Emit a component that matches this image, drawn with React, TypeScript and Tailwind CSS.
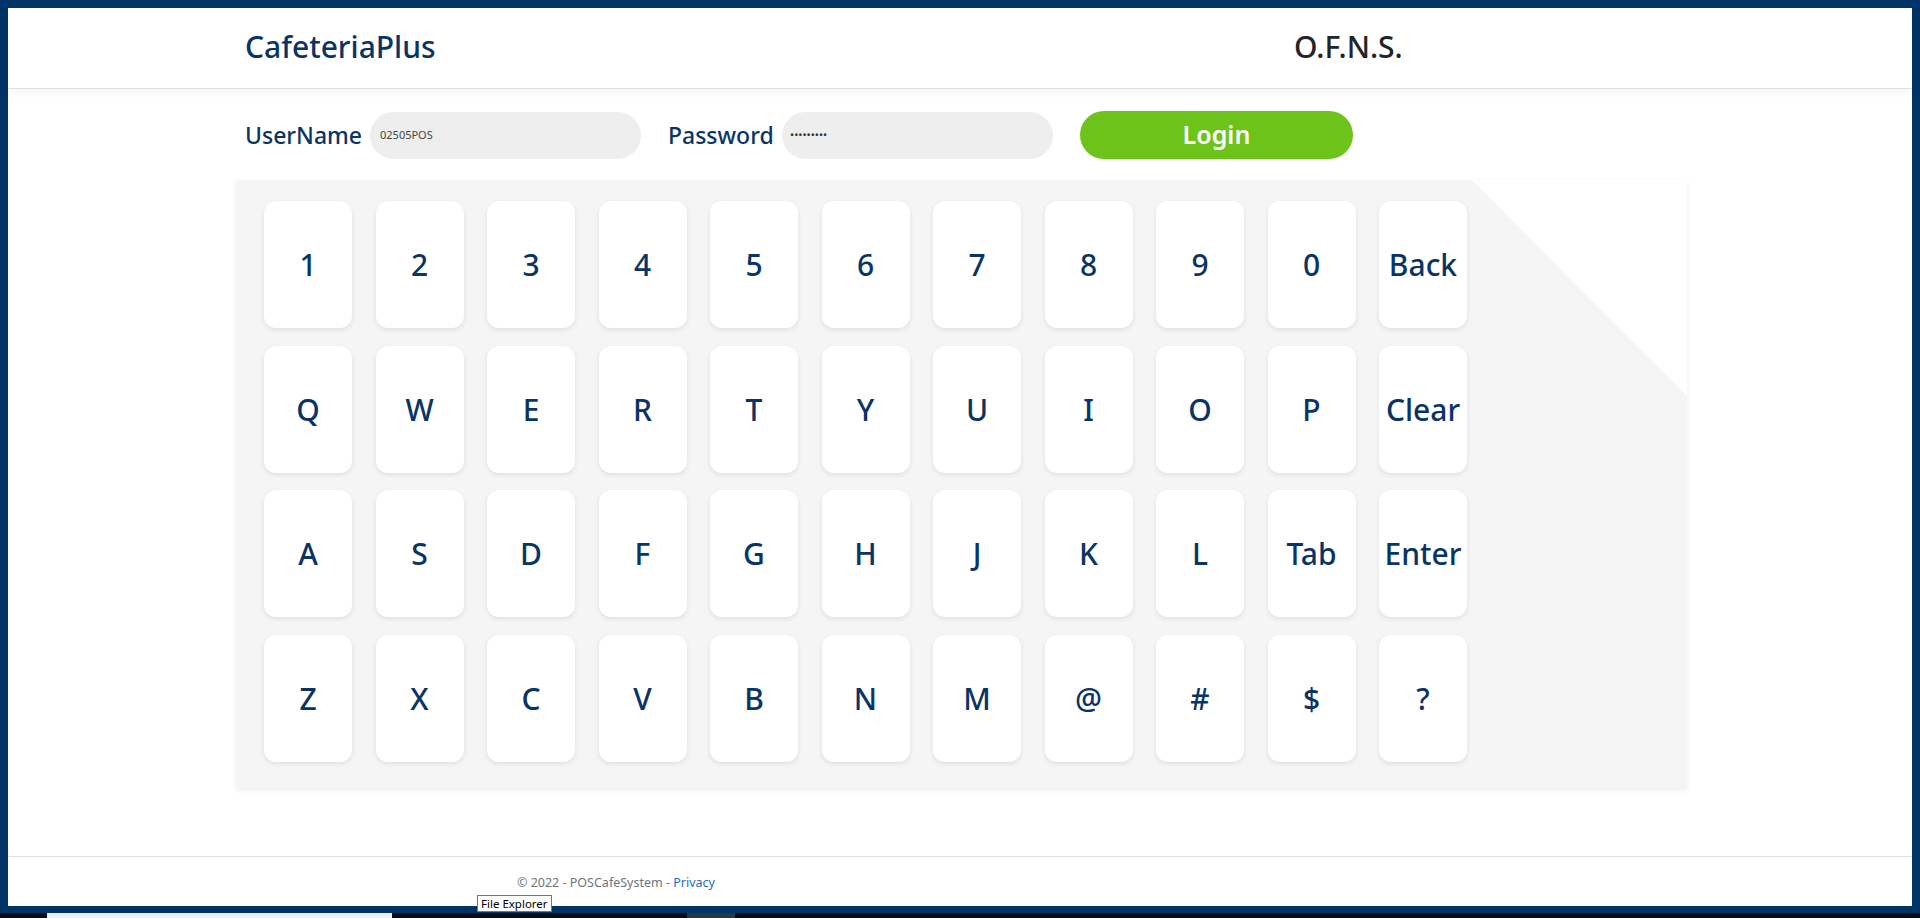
import React from 'react';

const row1 = ['1', '2', '3', '4', '5', '6', '7', '8', '9', '0', 'Back'];
const row2 = ['Q', 'W', 'E', 'R', 'T', 'Y', 'U', 'I', 'O', 'P', 'Clear'];
const row3 = ['A', 'S', 'D', 'F', 'G', 'H', 'J', 'K', 'L', 'Tab', 'Enter'];
const row4 = ['Z', 'X', 'C', 'V', 'B', 'N', 'M', '@', '#', '$', '?'];
const rows = [row1, row2, row3, row4];

function Key({ label }: { label: string }) {
  return (
    <button className="flex h-[127px] w-[88px] items-center justify-center rounded-[12px] bg-white text-[30px] font-medium text-[#0a3465] shadow-[0_2px_5px_rgba(0,0,0,0.09)]">
      {label}
    </button>
  );
}

export default function App() {
  return (
    <div className="relative flex h-[918px] w-full flex-col bg-[#003466] font-['Noto_Sans',sans-serif]">
      {/* window */}
      <div className="mx-[8px] mt-[8px] flex h-[898px] flex-col bg-white">
        <header className="flex h-[81px] shrink-0 items-center border-b border-[#dee2e6] pb-[3px] pl-[237px] shadow-[0_4px_8px_rgba(0,0,0,0.04)]">
          <div className="w-[1049px] text-[30px] font-medium text-[#0a3465]">CafeteriaPlus</div>
          <div className="text-[30px] font-medium text-[#212529]">O.F.N.S.</div>
        </header>

        <div className="mt-[22px] flex items-center pl-[237px]">
          <label className="w-[119px] text-[23px] font-medium text-[#0a3465]">UserName</label>
          <div className="ml-[6px] flex h-[47px] w-[271px] items-center rounded-full bg-[#eeeeee] pl-[10px] text-[11px] text-[#444]">
            02505POS
          </div>
          <label className="ml-[27px] w-[108px] text-[23px] font-medium text-[#0a3465]">Password</label>
          <div className="ml-[6px] flex h-[47px] w-[271px] items-center rounded-full bg-[#eeeeee] pl-[8px] text-[11px] tracking-[0px] text-[#333]">
            •••••••••
          </div>
          <button className="ml-[27px] flex h-[48px] w-[273px] items-center justify-center rounded-full bg-[#6cc31a] text-[25px] font-semibold text-white">
            Login
          </button>
        </div>

        <div className="relative ml-[228px] mt-[21px] h-[608px] w-[1451px] bg-[#f5f5f5] pl-[28px] pt-[21px] shadow-[0_2px_6px_rgba(0,0,0,0.07)]">
          <div className="absolute right-0 top-0 h-[216px] w-[215px] bg-white [clip-path:polygon(0_0,100%_0,100%_100%)]" />
          <div className="flex flex-col gap-[17.5px]">
            {rows.map((r, i) => (
              <div key={i} className="flex gap-[23.5px]">
                {r.map((k) => (
                  <Key key={k} label={k} />
                ))}
              </div>
            ))}
          </div>
        </div>

        <div className="flex-1" />

        <footer className="flex h-[50px] shrink-0 items-center border-t border-[#dee2e6] pl-[509px] pt-[4px] text-[12.5px] text-[#6c757d]">
          <span>
            © 2022 - POSCafeSystem - <a className="text-[#1b6ec2]">Privacy</a>
          </span>
        </footer>
      </div>

      <div className="h-[7px]" />
      <div className="flex h-[5px] bg-[#060c12]">
        <div className="ml-[47px] w-[345px] bg-[#f0f0f0]" />
        <div className="ml-[295px] w-[48px] bg-[#2b3640]" />
      </div>

      <div className="absolute left-[477px] top-[895px] flex h-[17px] items-center border border-[#767676] bg-white px-[3px] text-[11.5px] text-black">
        File Explorer
      </div>
    </div>
  );
}
